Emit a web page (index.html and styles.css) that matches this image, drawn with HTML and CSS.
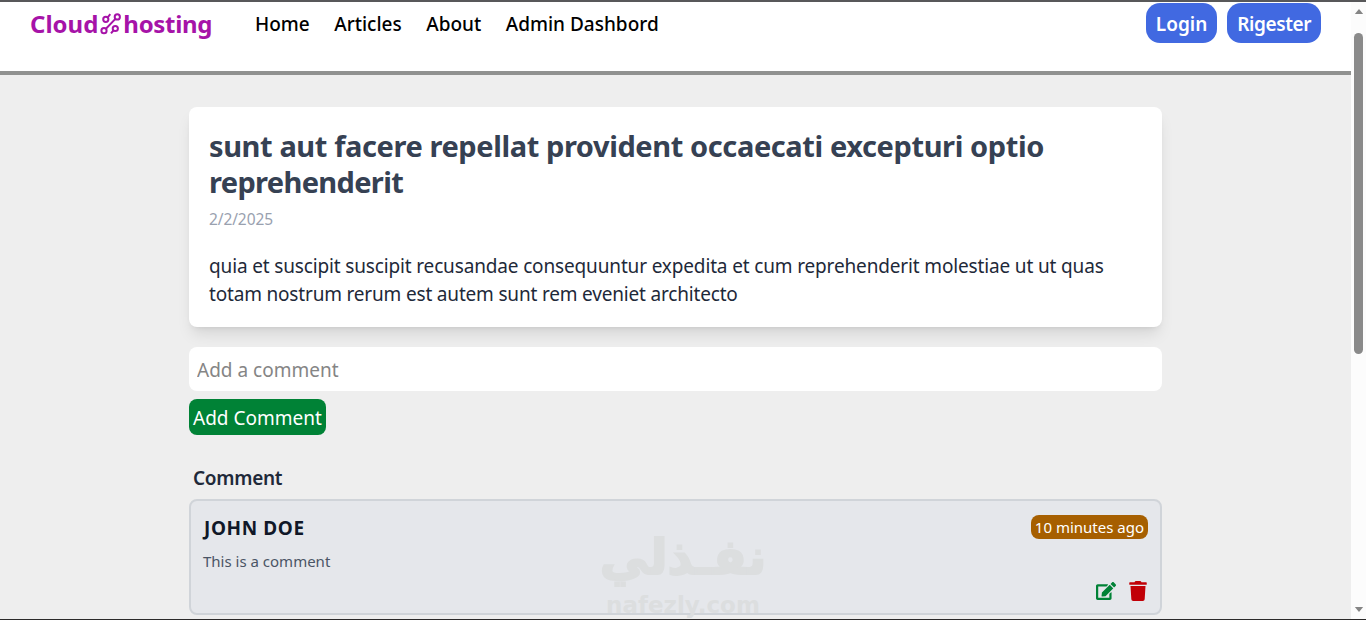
FILE: index.html
```html
<!DOCTYPE html>
<html lang="en">

<head>
    <meta charset="utf-8">
    <title>Cloud Hosting</title>
    <meta name="viewport" content="width=device-width, initial-scale=1">
    <link rel="stylesheet" href="styles.css">
</head>

<body>
    <div class="page">
        <header class="header">
            <nav class="navbar">
                <a class="logo" href="#">
                    <span class="logo-cloud">Cloud</span>
                    <svg class="logo-icon" viewBox="0 0 22 22" aria-hidden="true">
                        <circle cx="5.800" cy="6.300" r="2.600" />
                        <circle cx="17.300" cy="3.900" r="2.600" />
                        <circle cx="4" cy="17.700" r="2.600" />
                        <circle cx="15.300" cy="15.500" r="2.600" />
                        <path d="M7.700 4.300 10.300 1.200M15.400 5.900 5.900 15.700M13.400 17.500 11 20.400" />
                    </svg>
                    <span class="logo-hosting">hosting</span>
                </a>
                <div class="nav-links">
                    <a href="#">Home</a>
                    <a href="#">Articles</a>
                    <a href="#">About</a>
                    <a href="#">Admin Dashbord</a>
                </div>
            </nav>
            <div class="auth">
                <a class="auth-btn" href="#">Login</a>
                <a class="auth-btn register" href="#">Rigester</a>
            </div>
        </header>

        <main class="container">
            <article class="article">
                <h1 class="title">
                    <span class="line">sunt aut facere repellat provident occaecati excepturi optio</span>
                    <span class="line title-end">reprehenderit</span>
                </h1>
                <div class="date">2/2/2025</div>
                <p class="text">
                    <span class="line">quia et suscipit suscipit recusandae consequuntur expedita et cum reprehenderit molestiae ut ut quas</span>
                    <span class="line text-end">totam nostrum rerum est autem sunt rem eveniet architecto</span>
                </p>
            </article>

            <form class="comment-form">
                <input class="comment-input" type="text" placeholder="Add a comment">
                <button class="comment-btn" type="submit">Add Comment</button>
            </form>

            <h4 class="comments-title">Comment</h4>
            <div class="comment">
                <div class="comment-head">
                    <strong class="name">JOHN DOE</strong>
                    <span class="time">10 minutes ago</span>
                </div>
                <p class="comment-text">This is a comment</p>
                <div class="actions">
                    <svg class="edit" viewBox="0 0 576 512"><path d="M402.600 83.200l90.200 90.200c3.800 3.800 3.800 10 0 13.800L274.400 405.600l-92.800 10.300c-12.400 1.400-22.900-9.100-21.500-21.500l10.300-92.800L388.800 83.200c3.800-3.800 10-3.800 13.800 0zm162-22.900l-48.800-48.800c-15.200-15.200-39.900-15.200-55.200 0l-35.400 35.400c-3.800 3.800-3.800 10 0 13.800l90.200 90.200c3.800 3.800 10 3.800 13.800 0l35.400-35.400c15.200-15.300 15.200-40 0-55.200zM384 346.200V448H64V128h229.800c3.200 0 6.200-1.300 8.500-3.500l40-40c7.600-7.600 2.200-20.500-8.500-20.500H48C21.500 64 0 85.500 0 112v352c0 26.500 21.500 48 48 48h352c26.500 0 48-21.500 48-48V306.200c0-10.700-12.900-16-20.500-8.500l-40 40c-2.200 2.300-3.500 5.300-3.500 8.500z" /></svg>
                    <svg class="trash" viewBox="0 0 448 512"><path d="M432 32H312l-9.400-18.700A24 24 0 0 0 281.100 0H166.800a23.700 23.700 0 0 0-21.400 13.300L136 32H16A16 16 0 0 0 0 48v32a16 16 0 0 0 16 16h416a16 16 0 0 0 16-16V48a16 16 0 0 0-16-16zM53.200 467a48 48 0 0 0 47.900 45h245.800a48 48 0 0 0 47.900-45L416 128H32z" /></svg>
                </div>
                <div class="watermark" aria-hidden="true">
                    <span class="mark-ar" dir="rtl">نفـذلي</span>
                    <span class="mark-en">nafezly.com</span>
                </div>
            </div>
        </main>
    </div>

    <div class="scrollbar">
        <svg class="arrow" viewBox="0 0 10 6"><path d="M0 6 5 0l5 6z" /></svg>
        <div class="thumb"></div>
        <svg class="arrow arrow-down" viewBox="0 0 10 6"><path d="M0 0h10L5 6z" /></svg>
    </div>
</body>

</html>
```
FILE: styles.css
```css
* {
    box-sizing: border-box;
    margin: 0;
    padding: 0;
}

body {
    display: flex;
    height: 620px;
    overflow: hidden;
    border-top: 2px solid #58585a;
    border-bottom: 1px solid #2b2929;
    background-color: #eee;
    color: #1e2939;
    font-family: "Noto Sans", "Open Sans", sans-serif;
    font-size: 19px;
    line-height: 28px;
}

a {
    color: inherit;
    text-decoration: none;
}

.page {
    flex: 1;
}

.header {
    display: flex;
    justify-content: space-between;
    height: 73px;
    padding: 0 30px;
    border-bottom: 4px solid #909190;
    background-color: white;
}

.navbar {
    display: flex;
    height: 44px;
    align-items: center;
}

.logo {
    display: flex;
    align-items: center;
    width: 225px;
    color: #a613a8;
    font-size: 24px;
    font-weight: 700;
}

.logo-icon {
    width: 22px;
    height: 22px;
    margin: 0 1px 0 2px;
    fill: none;
    stroke: #a613a8;
    stroke-width: 2;
}

.logo-hosting {
    letter-spacing: -0.3px;
}

.nav-links {
    display: flex;
    gap: 24.5px;
    color: black;
    font-weight: 500;
}

.auth {
    display: flex;
    gap: 10px;
    padding-top: 1px;
}

.auth-btn {
    height: 40px;
    padding: 0 10px;
    border-radius: 14px;
    background-color: #4169e1;
    color: white;
    font-weight: 600;
    line-height: 42px;
}

.register {
    letter-spacing: -0.42px;
}

.container {
    width: 973px;
    margin: 32px auto 0 189px;
}

.article {
    height: 220px;
    padding: 21px 20px;
    border-radius: 8px;
    background-color: white;
    box-shadow: 0 10px 15px -3px rgba(0, 0, 0, 0.1), 0 4px 6px -4px rgba(0, 0, 0, 0.1);
    white-space: nowrap;
}

.line {
    display: block;
}

.title {
    color: #364153;
    font-size: 29px;
    font-weight: 700;
    letter-spacing: -0.4px;
    line-height: 36px;
}

.title-end {
    letter-spacing: -0.65px;
}

.date {
    margin-top: 7px;
    color: #99a1af;
    font-size: 15.500px;
    letter-spacing: -0.1px;
    line-height: 24px;
}

.text {
    margin-top: 21px;
    letter-spacing: -0.15px;
}

.text-end {
    letter-spacing: -0.18px;
}

.comment-form {
    margin-top: 20px;
}

.comment-input {
    display: block;
    width: 100%;
    height: 44px;
    padding: 1px 8px 0;
    border: none;
    border-radius: 8px;
    background-color: white;
    font: inherit;
}

.comment-input::placeholder {
    color: #858585;
}

.comment-btn {
    width: 137px;
    height: 36px;
    margin-top: 8px;
    padding: 2px 4px 0;
    border: none;
    border-radius: 8px;
    background-color: #008236;
    color: white;
    font: inherit;
    text-align: left;
    white-space: nowrap;
    vertical-align: top;
}

.comments-title {
    margin: 29px 0 7px 4px;
    font-size: 19px;
    font-weight: 600;
    letter-spacing: -0.3px;
}

.comment {
    position: relative;
    height: 116px;
    padding: 13px 12px;
    border: 2px solid #d0d4d9;
    border-radius: 8px;
    background-color: #e5e7eb;
}

.comment-head {
    display: flex;
    justify-content: space-between;
}

.name {
    padding-left: 1px;
    color: #101828;
    font-weight: 700;
    letter-spacing: 0.6px;
}

.time {
    height: 24px;
    margin-top: 1px;
    padding: 0 4px;
    border-radius: 8px;
    background-color: #a65f00;
    color: white;
    font-size: 15px;
    line-height: 25px;
    white-space: nowrap;
}

.comment-text {
    margin-top: 7px;
    color: #4a5565;
    font-size: 15px;
    line-height: 24px;
}

.actions {
    display: flex;
    justify-content: flex-end;
    align-items: center;
    gap: 13px;
    height: 20px;
    margin: 8px 1px 0 0;
}

.edit {
    width: 20px;
    height: 18px;
    fill: #008236;
}

.trash {
    width: 18px;
    height: 20px;
    fill: #c10007;
}

/* faint site mark lying over the comment card */
.watermark {
    position: absolute;
    top: 26px;
    left: 407px;
    width: 170px;
    height: 92px;
    overflow: hidden;
    color: #dcdedf;
    font-family: "DejaVu Sans", sans-serif;
    font-weight: 700;
    text-align: center;
    white-space: nowrap;
}

.mark-ar {
    display: block;
    font-size: 49px;
    line-height: 62px;
    -webkit-text-stroke: 2px #dcdedf;
}

.mark-en {
    display: block;
    font-size: 23px;
    line-height: 32px;
}

.scrollbar {
    display: flex;
    flex-direction: column;
    align-items: center;
    width: 15px;
    padding: 7px 0 7px;
    background-color: #fcfcfc;
}

.arrow {
    width: 10px;
    height: 5px;
    fill: #858585;
}

.thumb {
    width: 9px;
    height: 321px;
    margin-top: 19px;
    border-radius: 5px;
    background-color: #8a8a8a;
}

.arrow-down {
    margin-top: auto;
}
```
